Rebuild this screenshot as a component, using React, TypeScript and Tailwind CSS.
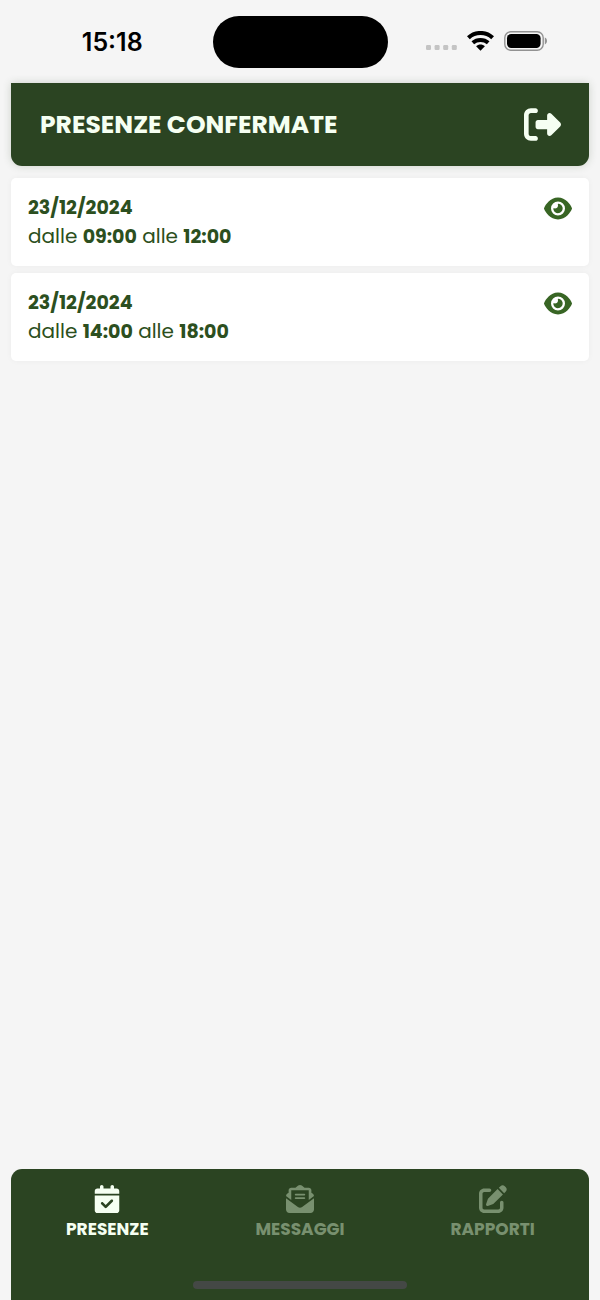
import type { IconType } from "react-icons";
import {
  FaCalendarCheck,
  FaEnvelopeOpenText,
  FaEye,
  FaPenToSquare,
  FaRightFromBracket,
} from "react-icons/fa6";

type Shift = { date: string; from: string; to: string };
type Tab = { label: string; icon: IconType; active?: boolean };

const shifts: Shift[] = [
  { date: "23/12/2024", from: "09:00", to: "12:00" },
  { date: "23/12/2024", from: "14:00", to: "18:00" },
];

const tabs: Tab[] = [
  { label: "PRESENZE", icon: FaCalendarCheck, active: true },
  { label: "MESSAGGI", icon: FaEnvelopeOpenText },
  { label: "RAPPORTI", icon: FaPenToSquare },
];

function StatusBar() {
  return (
    <div className="grid h-[83px] shrink-0 grid-cols-[1fr_175px_1fr] items-center text-black">
      <div className="pl-3 text-center font-[Inter,sans-serif] text-[25px] leading-8 font-semibold">15:18</div>
      <div className="h-[52px] rounded-full bg-black" />
      <div className="flex items-center gap-[10px] pb-[2px] pl-[38px]">
        <svg className="mt-[13px] h-[5px] w-[31px]" viewBox="0 0 31 5" fill="#c4c4c4" aria-hidden="true">
          <rect width="5" height="5" rx="1.2" />
          <rect x="8.6" width="5" height="5" rx="1.2" />
          <rect x="17.2" width="5" height="5" rx="1.2" />
          <rect x="25.8" width="5" height="5" rx="1.2" />
        </svg>
        <svg className="h-[20px] w-[27px]" viewBox="0 0 27 20" fill="none" stroke="#000" aria-hidden="true">
          <path d="M1.4 6.7C8.2.4 18.8.4 25.6 6.7" strokeWidth="4.1" />
          <path d="M5.8 11.8C10 8 17 8 21.2 11.8" strokeWidth="3.9" />
          <path d="M9.1 15.2c2.4-2.2 6.4-2.2 8.8 0l-4.4 4.5z" fill="#000" stroke="none" />
        </svg>
        <svg className="h-[20px] w-[44px]" viewBox="0 0 44 20" aria-hidden="true">
          <rect x="0.8" y="0.8" width="38.4" height="18.4" rx="6" fill="none" stroke="#929292" strokeWidth="1.4" />
          <rect x="3" y="3.1" width="33.6" height="13.8" rx="4.2" fill="#000" />
          <path d="M40.8 6.6c2.9 1 2.9 5.8 0 6.8z" fill="#929292" />
        </svg>
      </div>
    </div>
  );
}

function ShiftCard({ date, from, to }: Shift) {
  return (
    <li className="flex items-start justify-between rounded-[5px] bg-white px-[17px] py-4 shadow-[0_0_6px_rgba(0,0,0,0.04)]">
      <div className="text-[20px] leading-7 font-normal text-[#2c4f20]">
        <p className="text-[19px] leading-7 font-bold">{date}</p>
        <p>
          dalle <strong className="text-[19px] leading-none font-bold">{from}</strong> alle{" "}
          <strong className="text-[19px] leading-none font-bold">{to}</strong>
        </p>
      </div>
      <button type="button" aria-label={`Dettagli ${date} ${from}`} className="mt-[2px] text-[#386524]">
        <FaEye className="h-[25px] w-7" />
      </button>
    </li>
  );
}

export default function App() {
  return (
    <div className="flex min-h-screen flex-col bg-[#f5f5f5] font-[Poppins,Inter,sans-serif]">
      <StatusBar />
      <header className="mx-[11px] flex h-[83px] shrink-0 items-center justify-between rounded-b-[11px] bg-[#2b4422] pr-[28px] pl-[29px] text-[#f5fff2] shadow-[0_0_8px_rgba(43,68,34,0.2)]">
        <h1 className="text-[25px] leading-8 font-bold">PRESENZE CONFERMATE</h1>
        <button type="button" aria-label="Esci">
          <FaRightFromBracket className="size-[37px]" />
        </button>
      </header>
      <main className="flex-1 px-[11px] pt-3">
        <ul className="flex flex-col gap-[7px]">
          {shifts.map((shift) => (
            <ShiftCard key={shift.from} {...shift} />
          ))}
        </ul>
      </main>
      <nav className="mx-[11px] flex shrink-0 flex-col rounded-t-[11px] bg-[#2b4422] pt-4 pb-[11px]">
        <div className="grid grid-cols-3">
          {tabs.map(({ label, icon: Icon, active }) => (
            <a
              key={label}
              href={`#${label.toLowerCase()}`}
              aria-current={active ? "page" : undefined}
              className={`flex flex-col items-center gap-1 text-[17px] leading-6 font-bold ${
                active ? "text-[#f5fff2]" : "text-[#78906f]"
              }`}
            >
              <Icon className="h-7 w-auto" />
              {label}
            </a>
          ))}
        </div>
        <div className="mt-10 h-2 w-[214px] self-center rounded-full bg-[#444845]" />
      </nav>
    </div>
  );
}
